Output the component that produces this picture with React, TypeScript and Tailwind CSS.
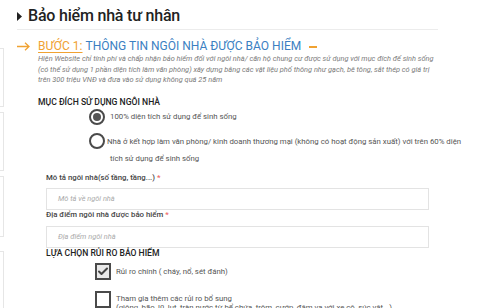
import { Check } from 'lucide-react';

const font = { fontFamily: 'Roboto, "Noto Sans", sans-serif' };

function Radio({ checked }: { checked?: boolean }) {
  return (
    <span className="flex h-[16px] w-[16px] shrink-0 items-center justify-center rounded-full border-2 border-[#4a4a4a] bg-white">
      {checked && <span className="h-[8px] w-[8px] rounded-full bg-[#555]" />}
    </span>
  );
}

function Checkbox({ checked }: { checked?: boolean }) {
  return (
    <span
      className={
        'flex h-[17px] w-[16px] shrink-0 items-center justify-center border-2 border-[#4a4a4a] ' +
        (checked ? 'bg-[#e9e9e9]' : 'bg-white')
      }
    >
      {checked && <Check size={13} strokeWidth={4} className="text-[#444]" />}
    </span>
  );
}

export default function App() {
  return (
    <div className="flex h-[308px] w-[480px] overflow-hidden bg-white text-[#333]" style={font}>
      {/* left rail boxes */}
      <div className="flex w-[4px] shrink-0 flex-col pt-[48px]">
        <div className="h-[62px] border-y border-r border-[#e6e6e6]" />
        <div className="mt-[5px] h-[63px] border-y border-r border-[#e6e6e6]" />
        <div className="mt-[5px] h-[65px] border-y border-r border-[#e6e6e6]" />
        <div className="mt-[14px] h-[60px] border-t border-r border-[#e6e6e6]" />
      </div>

      <div className="ml-[13px] w-[421px] shrink-0">
        {/* page title */}
        <div className="flex h-[30px] items-start border-b border-[#ececec] pt-[4px]">
          <svg width="5" height="9" viewBox="0 0 5 9" className="mt-[8px]">
            <path d="M0 0 L5 4.5 L0 9 Z" fill="#222" />
          </svg>
          <h1 className="ml-[6px] text-[16px] font-medium leading-[24px] tracking-[-0.2px] text-[#222]">
            Bảo hiểm nhà tư nhân
          </h1>
        </div>

        {/* step heading */}
        <div className="mt-[8px] flex h-[16px] items-center">
          <svg width="13" height="9" viewBox="0 0 13 9" className="shrink-0">
            <path d="M0 4.5 H12 M8 0.8 L12 4.5 L8 8.2" stroke="#f0a232" strokeWidth="1.3" fill="none" />
          </svg>
          <div className="ml-[8px] flex items-center whitespace-nowrap text-[12px] leading-[16px]">
            <span className="text-[#f0a232] underline underline-offset-2">BƯỚC 1:</span>
            <span className="ml-[3px] text-[#3b7fc2]">THÔNG TIN NGÔI NHÀ ĐƯỢC BẢO HIỂM</span>
            <span className="ml-[8px] mt-[1px] h-[2px] w-[8px] bg-[#f0a232]" />
          </div>
        </div>

        <p className="whitespace-nowrap pl-[21px] text-[7.4px] italic leading-[10.5px] text-[#7a7a7a]">
          Hiện Website chỉ tính phí và chấp nhận bảo hiểm đối với ngôi nhà/ căn hộ chung cư được sử dụng với mục đích để sinh sống
          <br />
          (có thể sử dụng 1 phần diện tích làm văn phòng) xây dựng bằng các vật liệu phổ thông như gạch, bê tông, sắt thép có giá trị
          <br />
          trên 300 triệu VNĐ và đưa vào sử dụng không quá 25 năm
        </p>

        {/* usage purpose */}
        <div className="mt-[10px] pl-[21px] text-[8.6px] font-medium leading-[12px] text-[#222]">
          MỤC ĐÍCH SỬ DỤNG NGÔI NHÀ
        </div>
        <div className="ml-[72px] mt-[1px] flex items-center">
          <Radio checked />
          <span className="ml-[5px] text-[7.8px] leading-[16px] text-[#555]">100% diện tích sử dụng để sinh sống</span>
        </div>
        <div className="ml-[72px] mt-[8px] flex items-start">
          <Radio />
          <span className="ml-[2px] whitespace-nowrap text-[7.8px] leading-[17px] text-[#555]">
            Nhà ở kết hợp làm văn phòng/ kinh doanh thương mại (không có hoạt động sản xuất) với trên 60% diện
            <br />
            <span className="pl-[3px]">tích sử dụng để sinh sống</span>
          </span>
        </div>

        {/* house description */}
        <div className="mt-[5px] pl-[29px]">
          <div className="text-[7.8px] font-medium leading-[12px] text-[#444]">
            Mô tả ngôi nhà(số tầng, tầng...) <span className="text-[#e66]">*</span>
          </div>
          <div className="mt-[4px] flex h-[22px] w-[383px] items-center border border-[#e3e3e3] pl-[11px] text-[7.4px] italic text-[#aaa]">
            Mô tả về ngôi nhà
          </div>
          <div className="text-[7.8px] font-medium leading-[10px] text-[#444]">
            Địa điểm ngôi nhà được bảo hiểm <span className="text-[#e66]">*</span>
          </div>
          <div className="mt-[6px] flex h-[22px] w-[383px] items-center border border-[#e3e3e3] pl-[11px] text-[7.4px] italic text-[#aaa]">
            Địa điểm ngôi nhà
          </div>
          <div className="text-[8.6px] font-medium leading-[10px] text-[#222]">LỰA CHỌN RỦI RO BẢO HIỂM</div>
        </div>

        {/* risk options */}
        <div className="ml-[78px] mt-[5px] flex items-center">
          <Checkbox checked />
          <span className="ml-[5px] text-[7.8px] leading-[17px] text-[#555]">Rủi ro chính ( cháy, nổ, sét đánh)</span>
        </div>
        <div className="ml-[78px] mt-[11px] flex items-start">
          <Checkbox />
          <span className="ml-[5px] whitespace-nowrap pt-[3px] text-[7.8px] leading-[9px] text-[#555]">
            Tham gia thêm các rủi ro bổ sung
            <br />
            (giông, bão, lũ, lụt, tràn nước từ bể chứa, trộm, cướp, đâm va với xe cộ, súc vật...)
          </span>
        </div>
      </div>
    </div>
  );
}
